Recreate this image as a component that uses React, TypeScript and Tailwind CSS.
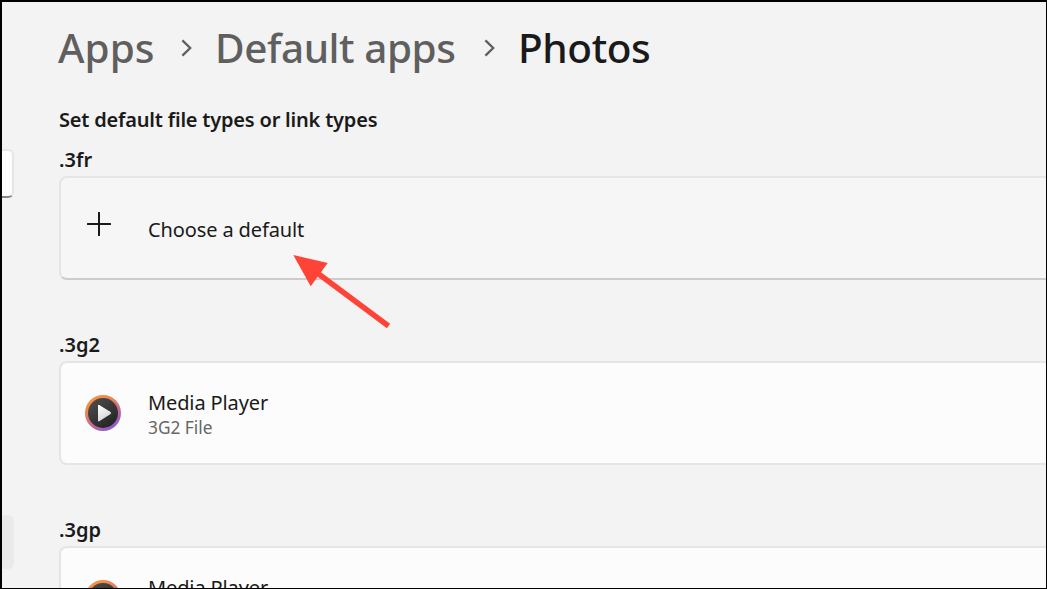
import React from 'react';

const fileTypes = [
  { ext: '.3g2', app: 'Media Player', description: '3G2 File' },
  { ext: '.3gp', app: 'Media Player', description: '3GP File' },
];

const Chevron = ({ className }: { className: string }) => (
  <svg className={className} width="12" height="18" viewBox="0 0 12 18" fill="none">
    <path d="M1.4 1.4 L9.2 9 L1.4 16.6" stroke="#5f5f5f" strokeWidth="2.3" />
  </svg>
);

const PlusIcon = () => (
  <svg width="24" height="24" viewBox="0 0 24 24" fill="none">
    <path d="M12 0.8V23.2M0.8 12H23.2" stroke="#1a1a1a" strokeWidth="2" strokeLinecap="round" />
  </svg>
);

const MediaPlayerIcon = () => (
  <svg width="36" height="36" viewBox="0 0 36 36">
    <defs>
      <linearGradient id="ring" x1="8" y1="2" x2="27" y2="34" gradientUnits="userSpaceOnUse">
        <stop offset="0" stopColor="#f9943f" />
        <stop offset="0.3" stopColor="#ee8058" />
        <stop offset="0.65" stopColor="#c06a9a" />
        <stop offset="1" stopColor="#8a5bc9" />
      </linearGradient>
      <linearGradient id="disc" x1="8" y1="4" x2="28" y2="32" gradientUnits="userSpaceOnUse">
        <stop offset="0" stopColor="#4c4c4c" />
        <stop offset="1" stopColor="#232323" />
      </linearGradient>
      <linearGradient id="play" x1="14" y1="10" x2="22" y2="26" gradientUnits="userSpaceOnUse">
        <stop offset="0" stopColor="#ffffff" />
        <stop offset="1" stopColor="#d2d2d2" />
      </linearGradient>
    </defs>
    <circle cx="18" cy="18" r="18" fill="url(#ring)" />
    <circle cx="18" cy="18" r="15" fill="url(#disc)" />
    <path
      d="M13.8 10.6 L24.8 17.4 Q25.6 18 24.8 18.6 L13.8 25.6 Z"
      fill="url(#play)"
      stroke="url(#play)"
      strokeWidth="1.6"
      strokeLinejoin="round"
    />
  </svg>
);

const SectionLabel = ({ children }: { children: React.ReactNode }) => (
  <h3 className="h-8 text-[20px] leading-8 font-semibold">{children}</h3>
);

export default function App() {
  return (
    <div className="relative flex h-[589px] w-[1047px] overflow-hidden border-t-2 border-r border-b border-l-2 border-black bg-[#f3f3f3] font-['Noto_Sans','Open_Sans',sans-serif] text-[#1a1a1a]">
      {/* Edge of the navigation pane */}
      <aside className="w-3 shrink-0 pt-[147px]">
        <div className="h-[49px] rounded-r-md border-2 border-l-0 border-[#e6e6e6] border-b-[#868686] bg-[#fdfdfd]" />
        <div className="mt-[317px] h-[54px] rounded-r-md bg-[#eaeaea]" />
      </aside>

      <main className="ml-[45px] flex-1">
        {/* Breadcrumb */}
        <nav className="mt-[18px] flex h-14 items-center text-[40.5px] leading-[56px] font-medium whitespace-nowrap text-[#5f5f5f]">
          <span className="-ml-px w-[123px]">Apps</span>
          <Chevron className="w-3" />
          <span className="ml-[22px] w-[269px] tracking-[-0.45px]">Default apps</span>
          <Chevron className="w-3" />
          <span className="ml-[22px] tracking-[-0.4px] text-[#1a1a1a]">Photos</span>
        </nav>

        <h2 className="mt-[28px] h-8 text-[20px] leading-8 font-semibold tracking-[-0.2px]">
          Set default file types or link types
        </h2>

        <section className="mt-[8px]">
          <SectionLabel>.3fr</SectionLabel>
          <div className="flex h-[104px] rounded-l-lg border-2 border-r-0 border-[#e5e5e5] border-b-[#cccccc] bg-[#f6f6f6]">
            <div className="mt-[34px] ml-[26px] w-[61px]">
              <PlusIcon />
            </div>
            <span className="mt-[36px] text-[20px] leading-8 tracking-[-0.12px]">Choose a default</span>
          </div>
        </section>

        {fileTypes.map((type) => (
          <section key={type.ext} className="mt-[49px]">
            <SectionLabel>{type.ext}</SectionLabel>
            <div className="flex h-[104px] rounded-l-lg border-2 border-r-0 border-[#e5e5e5] bg-[#fcfcfc]">
              <div className="mt-8 ml-6 w-[63px]">
                <MediaPlayerIcon />
              </div>
              <div className="mt-6">
                <p className="text-[20px] leading-8 tracking-[-0.12px]">{type.app}</p>
                <p className="text-[17.3px] leading-[18px] text-[#666666]">{type.description}</p>
              </div>
            </div>
          </section>
        ))}
      </main>

      {/* Pointer to the "Choose a default" row */}
      <svg className="absolute top-[248px] left-[288px]" width="110" height="85" viewBox="290 250 110 85">
        <path d="M318 273.5 L388.5 326" stroke="#ff4336" strokeWidth="5.4" />
        <path d="M293.3 255 L327.7 263 L310.7 286.2 Z" fill="#ff4336" />
      </svg>
    </div>
  );
}
